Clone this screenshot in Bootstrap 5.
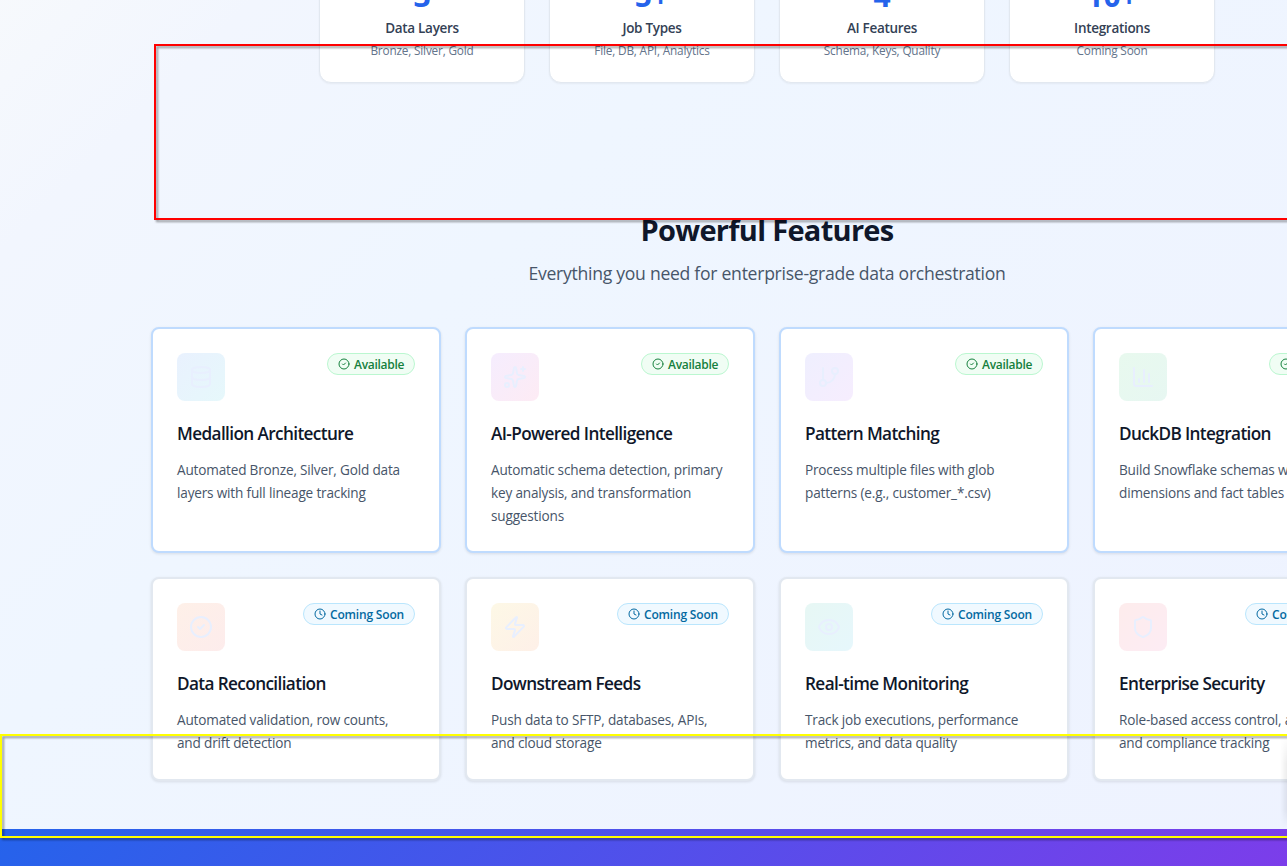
<!DOCTYPE html>
<html lang="en">
<head>
<meta charset="utf-8">
<meta name="viewport" content="width=device-width, initial-scale=1">
<title>Data Orchestration</title>
<link href="https://cdn.jsdelivr.net/npm/bootstrap@5.3.0/dist/css/bootstrap.min.css" rel="stylesheet">
<style>
html{overflow:hidden}
body{font-family:"Open Sans","Noto Sans",sans-serif;width:1287px;height:866px;overflow:hidden;color:#0f172a;position:relative}
.page-canvas{width:1534px;height:866px;overflow:hidden;background:linear-gradient(135deg,#f8fafc -60px,#f2f6fe 180px,#eff6ff 520px,#eef2ff 100%)}
.stats-strip{height:83px;width:896px}
.stat-box{background:#fff;border:1px solid #e2e8f0;border-radius:12px;box-shadow:0 1px 2px rgba(0,0,0,.05);white-space:nowrap}
.stat-num{font-size:30px;line-height:36px;font-weight:700;color:#2563eb;margin-bottom:4px}
.stat-name{font-size:13.5px;letter-spacing:-.3px;line-height:20px;font-weight:600;color:#334155;margin-bottom:4px}
.stat-sub{font-size:11.8px;letter-spacing:-.18px;line-height:16px;color:#64748b}
.features{padding-top:129px;width:1232px}
.features h2{font-size:29px;line-height:36px;font-weight:700;letter-spacing:-.7px;margin-bottom:11px}
.intro{font-size:17.6px;letter-spacing:-.28px;line-height:28px;color:#475569;margin-bottom:40px}
.feature{height:100%;background:#fff;border:2px solid #e2e8f0;border-radius:8px;box-shadow:0 1px 3px rgba(0,0,0,.1);white-space:nowrap;padding:24px 24px 24.4px}
.feature.live{border-color:#bfdbfe}
svg{fill:none;stroke:currentColor;stroke-width:2;stroke-linecap:round;stroke-linejoin:round}
.tile{width:48px;height:48px;border-radius:8px;color:#e8effe}
.tile svg{width:24px;height:24px}
.t-blue{background:linear-gradient(135deg,#e9f1fe,#e6f8fb)}
.t-pink{background:linear-gradient(135deg,#f5edfe,#fdebf4)}
.t-violet{background:linear-gradient(135deg,#efeffe,#f6edfe)}
.t-green{background:linear-gradient(135deg,#e8f9ee,#e7f7f2)}
.t-orange{background:linear-gradient(135deg,#fef0e8,#fdecec)}
.t-amber{background:linear-gradient(135deg,#fdf8e6,#fef0e8)}
.t-teal{background:linear-gradient(135deg,#e7f7f4,#e6f7fc)}
.t-red{background:linear-gradient(135deg,#fdecec,#fdecf4)}
.feature h3{font-size:17.2px;line-height:28px;font-weight:600;letter-spacing:-.62px;margin:19px 0 10px}
.feature p{font-size:13.6px;letter-spacing:-.18px;line-height:23px;color:#475569;margin:0}
.pill{height:22px;width:88px;border:1px solid #bbf7d0;background:#f0fdf4;color:#15803d;border-radius:11px;padding:1px 0 0 10px;font-size:12px;letter-spacing:-.28px;font-weight:600;line-height:20px;gap:4px}
.pill.soon{width:112px;border-color:#bae6fd;background:#f0f9ff;color:#0369a1;letter-spacing:-.18px}
.pill svg{width:12px;height:12px;flex:none;margin-top:-1px}
.cta{height:140px;background:linear-gradient(135deg,#2563eb,#9333ea);margin-top:48px}
.frame{position:absolute;right:0;border:2px solid red;border-right:0;filter:drop-shadow(2px 2px 1px rgba(0,0,0,.4))}
.frame-top{left:154px;top:44px;height:176px}
.frame-bottom{left:0;top:734px;height:104px;border-color:#ff0}
.float-edge{position:absolute;right:0;top:736px;width:7px;height:92px;background:linear-gradient(90deg,transparent,rgba(0,0,0,.07));-webkit-mask-image:linear-gradient(transparent,#000 30%,#000 80%,transparent)}
</style>
</head>
<body>
<svg class="d-none">
<symbol id="i-check" viewBox="0 0 24 24"><circle cx="12" cy="12" r="10"/><path d="m9 12 2 2 4-4"/></symbol>
<symbol id="i-clock" viewBox="0 0 24 24"><circle cx="12" cy="12" r="10"/><path d="M12 6v6l4 2"/></symbol>
<symbol id="i-database" viewBox="0 0 24 24"><ellipse cx="12" cy="5" rx="9" ry="3"/><path d="M3 5v14a9 3 0 0 0 18 0V5M3 12a9 3 0 0 0 18 0"/></symbol>
<symbol id="i-sparkles" viewBox="0 0 24 24"><path d="M11.017 2.814a1 1 0 0 1 1.966 0l1.051 5.558a2 2 0 0 0 1.594 1.594l5.558 1.051a1 1 0 0 1 0 1.966l-5.558 1.051a2 2 0 0 0-1.594 1.594l-1.051 5.558a1 1 0 0 1-1.966 0l-1.051-5.558a2 2 0 0 0-1.594-1.594l-5.558-1.051a1 1 0 0 1 0-1.966l5.558-1.051a2 2 0 0 0 1.594-1.594zM20 2v4M22 4h-4"/><circle cx="4" cy="20" r="2"/></symbol>
<symbol id="i-branch" viewBox="0 0 24 24"><path d="M6 3v12M18 9a9 9 0 0 1-9 9"/><circle cx="18" cy="6" r="3"/><circle cx="6" cy="18" r="3"/></symbol>
<symbol id="i-chart" viewBox="0 0 24 24"><path d="M3 3v16a2 2 0 0 0 2 2h16M18 17V9M13 17V5M8 17v-3"/></symbol>
<symbol id="i-zap" viewBox="0 0 24 24"><path d="M4 14a1 1 0 0 1-.78-1.63l9.9-10.2a.5.5 0 0 1 .86.46l-1.92 6.02A1 1 0 0 0 13 10h7a1 1 0 0 1 .78 1.63l-9.9 10.2a.5.5 0 0 1-.86-.46l1.92-6.02A1 1 0 0 0 11 14z"/></symbol>
<symbol id="i-eye" viewBox="0 0 24 24"><path d="M2.062 12.348a1 1 0 0 1 0-.696 10.75 10.75 0 0 1 19.876 0 1 1 0 0 1 0 .696 10.75 10.75 0 0 1-19.876 0"/><circle cx="12" cy="12" r="3"/></symbol>
<symbol id="i-shield" viewBox="0 0 24 24"><path d="M20 13c0 5-3.5 7.5-7.66 8.95a1 1 0 0 1-.67-.01C7.5 20.5 4 18 4 13V6a1 1 0 0 1 1-1c2 0 4.5-1.2 6.24-2.72a1.17 1.17 0 0 1 1.52 0C14.51 3.81 17 5 19 5a1 1 0 0 1 1 1z"/></symbol>
</svg>
<div class="page-canvas">
<section class="stats-strip mx-auto d-flex align-items-end gap-4 text-center">
<div class="stat-box flex-fill p-4 w-25"><div class="stat-num">3</div><div class="stat-name">Data Layers</div><div class="stat-sub">Bronze, Silver, Gold</div></div>
<div class="stat-box flex-fill p-4 w-25"><div class="stat-num">5+</div><div class="stat-name">Job Types</div><div class="stat-sub">File, DB, API, Analytics</div></div>
<div class="stat-box flex-fill p-4 w-25"><div class="stat-num">4</div><div class="stat-name">AI Features</div><div class="stat-sub">Schema, Keys, Quality</div></div>
<div class="stat-box flex-fill p-4 w-25"><div class="stat-num">10+</div><div class="stat-name">Integrations</div><div class="stat-sub">Coming Soon</div></div>
</section>
<section class="features mx-auto">
<div class="text-center"><h2>Powerful Features</h2><div class="intro">Everything you need for enterprise-grade data orchestration</div></div>
<div class="row row-cols-4 g-4">
<div class="col"><div class="feature live"><div class="d-flex justify-content-between"><div class="tile t-blue d-flex align-items-center justify-content-center"><svg><use href="#i-database"/></svg></div><div class="pill d-flex align-items-center"><svg><use href="#i-check"/></svg>Available</div></div><h3>Medallion Architecture</h3><p>Automated Bronze, Silver, Gold data<br>layers with full lineage tracking</p></div></div>
<div class="col"><div class="feature live"><div class="d-flex justify-content-between"><div class="tile t-pink d-flex align-items-center justify-content-center"><svg><use href="#i-sparkles"/></svg></div><div class="pill d-flex align-items-center"><svg><use href="#i-check"/></svg>Available</div></div><h3>AI-Powered Intelligence</h3><p>Automatic schema detection, primary<br>key analysis, and transformation<br>suggestions</p></div></div>
<div class="col"><div class="feature live"><div class="d-flex justify-content-between"><div class="tile t-violet d-flex align-items-center justify-content-center"><svg><use href="#i-branch"/></svg></div><div class="pill d-flex align-items-center"><svg><use href="#i-check"/></svg>Available</div></div><h3>Pattern Matching</h3><p>Process multiple files with glob<br>patterns (e.g., customer_*.csv)</p></div></div>
<div class="col"><div class="feature live"><div class="d-flex justify-content-between"><div class="tile t-green d-flex align-items-center justify-content-center"><svg><use href="#i-chart"/></svg></div><div class="pill d-flex align-items-center"><svg><use href="#i-check"/></svg>Available</div></div><h3>DuckDB Integration</h3><p>Build Snowflake schemas with<br>dimensions and fact tables</p></div></div>
<div class="col"><div class="feature"><div class="d-flex justify-content-between"><div class="tile t-orange d-flex align-items-center justify-content-center"><svg><use href="#i-check"/></svg></div><div class="pill soon d-flex align-items-center"><svg><use href="#i-clock"/></svg>Coming Soon</div></div><h3>Data Reconciliation</h3><p>Automated validation, row counts,<br>and drift detection</p></div></div>
<div class="col"><div class="feature"><div class="d-flex justify-content-between"><div class="tile t-amber d-flex align-items-center justify-content-center"><svg><use href="#i-zap"/></svg></div><div class="pill soon d-flex align-items-center"><svg><use href="#i-clock"/></svg>Coming Soon</div></div><h3>Downstream Feeds</h3><p>Push data to SFTP, databases, APIs,<br>and cloud storage</p></div></div>
<div class="col"><div class="feature"><div class="d-flex justify-content-between"><div class="tile t-teal d-flex align-items-center justify-content-center"><svg><use href="#i-eye"/></svg></div><div class="pill soon d-flex align-items-center"><svg><use href="#i-clock"/></svg>Coming Soon</div></div><h3>Real-time Monitoring</h3><p>Track job executions, performance<br>metrics, and data quality</p></div></div>
<div class="col"><div class="feature"><div class="d-flex justify-content-between"><div class="tile t-red d-flex align-items-center justify-content-center"><svg><use href="#i-shield"/></svg></div><div class="pill soon d-flex align-items-center"><svg><use href="#i-clock"/></svg>Coming Soon</div></div><h3>Enterprise Security</h3><p>Role-based access control, audit<br>and compliance tracking</p></div></div>
</div>
</section>
<div class="cta"></div>
</div>
<div class="float-edge"></div>
<div class="frame frame-top"></div>
<div class="frame frame-bottom"></div>
<script src="https://cdn.jsdelivr.net/npm/bootstrap@5.3.0/dist/js/bootstrap.bundle.min.js"></script>
</body>
</html>
